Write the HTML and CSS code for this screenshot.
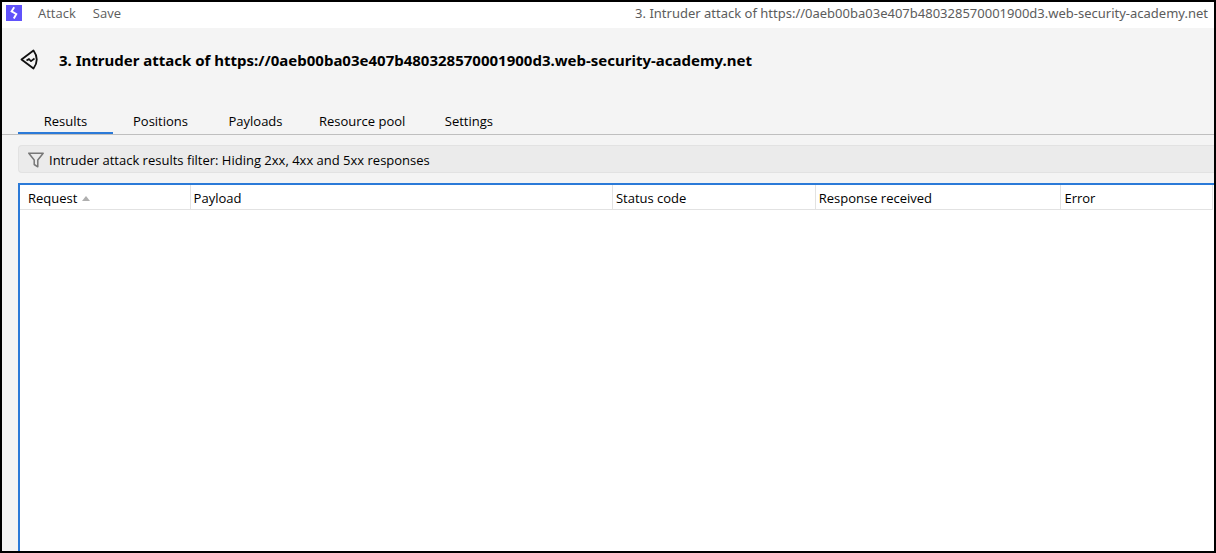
FILE: index.html
```html
<!DOCTYPE html>
<html lang="en">
<head>
<meta charset="utf-8">
<title>Intruder attack</title>
<link rel="stylesheet" href="styles.css">
</head>
<body>
<div class="window">
  <header class="menubar">
    <svg class="logo" viewBox="0 0 16 16" aria-hidden="true">
      <rect width="16" height="16" fill="#6052fb"/>
      <path d="M8.200 2.200L5.600 6.300L10.300 9L7.800 13.500" fill="none" stroke="#fff" stroke-width="1.900"/>
    </svg>
    <nav class="menus">
      <button class="menu" type="button">Attack</button>
      <button class="menu" type="button">Save</button>
    </nav>
    <span class="window-title">3. Intruder attack of https://0aeb00ba03e407b480328570001900d3.web-security-academy.net</span>
  </header>
  <div class="heading">
    <svg class="heading-icon" viewBox="0 0 20 22" aria-hidden="true">
      <path d="M1.500 10.500L13.500 1.500Q20 10.500 13.500 19.500Z" fill="none" stroke="#111" stroke-width="1.800" stroke-linejoin="round"/>
      <path d="M6.500 11.500L9 10L11 12.200L14.500 9.500" fill="none" stroke="#111" stroke-width="1.700" stroke-linejoin="round"/>
    </svg>
    <h1 class="title">3. Intruder attack of https://0aeb00ba03e407b480328570001900d3.web-security-academy.net</h1>
  </div>
  <div class="tabs" role="tablist">
    <button class="tab tab-active" type="button" role="tab" aria-selected="true">Results</button>
    <button class="tab" type="button" role="tab">Positions</button>
    <button class="tab" type="button" role="tab">Payloads</button>
    <button class="tab" type="button" role="tab">Resource pool</button>
    <button class="tab" type="button" role="tab">Settings</button>
  </div>
  <main class="results">
    <button class="filter" type="button">
      <svg class="filter-icon" viewBox="0 0 16 16" aria-hidden="true">
        <path d="M0.800 1.200H15.200L9.800 8V14.800L6.200 12.500V8Z" fill="none" stroke="#777" stroke-width="1.500" stroke-linejoin="round"/>
      </svg>
      <span>Intruder attack results filter: Hiding 2xx, 4xx and 5xx responses</span>
    </button>
    <div class="grid">
      <table class="table">
        <thead>
          <tr>
            <th class="col-request" scope="col" aria-sort="ascending">Request<svg class="sort" viewBox="0 0 8 5" aria-hidden="true"><path d="M0 5L4 0L8 5Z" fill="#afafaf"/></svg></th>
            <th class="col-payload" scope="col">Payload</th>
            <th class="col-status" scope="col">Status code</th>
            <th class="col-response" scope="col">Response received</th>
            <th class="col-error" scope="col">Error</th>
          </tr>
        </thead>
        <tbody></tbody>
      </table>
    </div>
  </main>
</div>
</body>
</html>
```
FILE: styles.css
```css
* { box-sizing: border-box; }

body {
  margin: 0;
  font-family: "Open Sans", "Noto Sans", sans-serif;
  font-size: 13px;
  line-height: 18px;
  color: #000;
}

button {
  margin: 0;
  padding: 0;
  border: 0;
  background: none;
  color: inherit;
  font: inherit;
}

.window {
  display: flex;
  flex-direction: column;
  min-height: 100vh;
  border: 2px solid #000;
  background: #f4f4f4;
}

.menubar {
  display: flex;
  align-items: center;
  height: 26px;
  padding: 0 6px 4px 4px;
  background: #fff;
  color: #5c5c5c;
}

.logo { width: 16px; height: 16px; }
.menus { display: flex; gap: 17px; margin-left: 16px; }
.window-title { margin-left: auto; font-family: "Noto Sans", sans-serif; }

.heading {
  display: flex;
  align-items: center;
  gap: 19px;
  height: 64px;
  padding-left: 18px;
}

.heading-icon { width: 20px; height: 22px; }
.title {
  margin: 0;
  font-family: "Noto Sans", sans-serif;
  font-size: 15px;
  font-weight: 700;
  line-height: 20px;
}

.tabs {
  display: flex;
  margin-top: 16px;
  padding-left: 16px;
  border-bottom: 1px solid #bfbfbf;
}

.tab {
  min-width: 95px;
  height: 26px;
  padding: 2px 16px 0;
  border-bottom: 2px solid transparent;
}

.tab-active { border-bottom-color: #2b7ad8; }

.results {
  display: flex;
  flex: 1;
  flex-direction: column;
  gap: 10px;
  padding: 10px 0 0 16px;
}

.filter {
  display: flex;
  align-items: center;
  gap: 5px;
  height: 28px;
  padding: 1px 9px 0;
  border: 1px solid #e2e2e2;
  border-right: 0;
  border-radius: 4px 0 0 4px;
  background: #ebebeb;
}

.filter-icon { width: 16px; height: 16px; }

.grid {
  flex: 1;
  padding-right: 1px;
  border: solid #2b7ad8;
  border-width: 2px 0 0 2px;
  background: #fff;
}

.table {
  width: 100%;
  border-collapse: separate;
  border-spacing: 0;
  table-layout: fixed;
}

.table th {
  height: 25px;
  padding: 2px 3px 0;
  border: solid #e2e2e2;
  border-width: 0 1px 1px 0;
  font-weight: 400;
  text-align: left;
  white-space: nowrap;
}

.table .col-request { width: 14.3%; padding-left: 8px; }
.col-payload { width: 35.4%; }
.col-status { width: 17%; }
.col-response { width: 20.6%; }
.sort { width: 8px; height: 5px; margin-left: 5px; vertical-align: 2px; }
```
